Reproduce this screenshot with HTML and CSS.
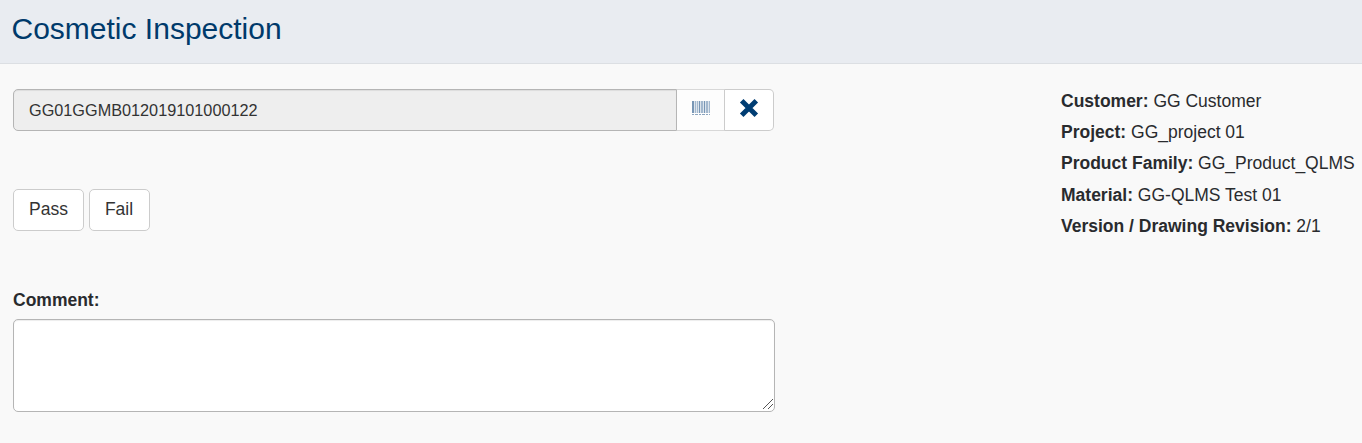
FILE: index.html
```
<!DOCTYPE html>
<html lang="en">
<head>
<meta charset="utf-8">
<title>Cosmetic Inspection</title>
<link rel="stylesheet" href="styles.css">
</head>
<body>
<header class="page-header"><h1>Cosmetic Inspection</h1></header>
<main class="content">
  <section class="form">
    <div class="input-group">
      <input class="serial" type="text" value="GG01GGMB012019101000122" readonly>
      <button class="addon barcode" aria-label="Scan">
        <svg width="20" height="15" viewBox="0 0 20 15"><path fill="#dce4ec" d="M1 1h18v12H1z"/><path fill="#7896b5" d="M1 1h2v12H1zM8 1h1v12H8zM13 1h1v12h-1z"/><path fill="#a3b8ce" d="M4 1h1v12H4zM6 1h1v12H6zM10 1h2v12h-2zM15 1h2v12h-2zM18 1h1v12h-1z"/><path stroke="#8ca5bf" stroke-dasharray="2 1 3 1" d="M1 14.500h18"/></svg>
      </button>
      <button class="addon clear" aria-label="Clear">
        <svg width="20" height="20" viewBox="0 0 20 20" stroke="#003d73" stroke-width="5"><path d="M2.700 2.700l14.600 14.600M17.300 2.700L2.700 17.300"/></svg>
      </button>
    </div>
    <div class="actions"><button class="btn">Pass</button><button class="btn fail">Fail</button></div>
    <label class="label" for="comment">Comment:</label>
    <div class="comment-box">
      <textarea id="comment" class="comment"></textarea>
      <svg class="grip" width="12" height="12" viewBox="0 0 12 12" stroke="#555" fill="none"><path d="M1 11L11 1M6 11l5-5"/></svg>
    </div>
  </section>
  <aside class="details">
    <div><b>Customer:</b> GG Customer</div>
    <div><b>Project:</b> GG_project 01</div>
    <div><b>Product Family:</b> GG_Product_QLMS</div>
    <div><b>Material:</b> GG-QLMS Test 01</div>
    <div><b>Version / Drawing Revision:</b> 2/1</div>
  </aside>
</main>
</body>
</html>
```
FILE: styles.css
```
* { box-sizing: border-box; }
body { margin: 0; height: 443px; overflow: hidden; background: #f9f9f9; color: #292b2e; font-family: "Liberation Sans", Arial, sans-serif; font-size: 17.5px; }
.page-header { height: 64px; padding: 11px 12px 0; background: #e9ecf1; border-bottom: 1px solid #dcdfe3; }
.page-header h1 { margin: 0 0 0 -0.5px; font-size: 30px; line-height: 35px; font-weight: 400; color: #003a6b; }
.content { display: flex; padding: 25px 0 0 13px; }
.form { width: 762px; }
.input-group { display: flex; width: 761px; height: 42px; }
.serial { flex: 1; min-width: 0; padding: 1px 15px 0; border: 1px solid #b5b5b5; border-radius: 5px 0 0 5px; background: #eee; color: #333; font: 16.25px "Liberation Sans", Arial, sans-serif; box-shadow: inset 0 1px 1px rgba(0,0,0,.075); outline: 0; }
.addon { display: flex; align-items: center; justify-content: center; padding: 0 0 3px; border: 1px solid #ccc; border-left: 0; background: #fff; }
.barcode { width: 48px; padding-bottom: 5px; background: #fdfdfd; border-color: #d8d8d8 #ccc; }
.clear { width: 49px; padding: 0 0 4px 1px; border-radius: 0 5px 5px 0; }
.clear svg { margin-left: -1px; }
.actions { display: flex; gap: 5px; margin-top: 58px; }
.btn { height: 42px; padding: 0 15px 2px; border: 1px solid #ccc; border-radius: 5px; background: #fff; color: #333; font: 17.5px "Liberation Sans", Arial, sans-serif; }
.fail { padding-right: 16px; }
.label { display: block; margin-top: 58px; line-height: 22px; font-weight: 700; }
.comment-box { position: relative; margin-top: 8px; }
.comment { display: block; width: 762px; height: 93px; border: 1px solid #b5b5b5; border-radius: 5px; background: #fff; box-shadow: inset 0 1px 1px rgba(0,0,0,.075); resize: none; }
.grip { position: absolute; right: 1px; bottom: 2px; }
.details { margin-left: 286px; margin-top: -3.150px; line-height: 31.25px; white-space: nowrap; }
```
